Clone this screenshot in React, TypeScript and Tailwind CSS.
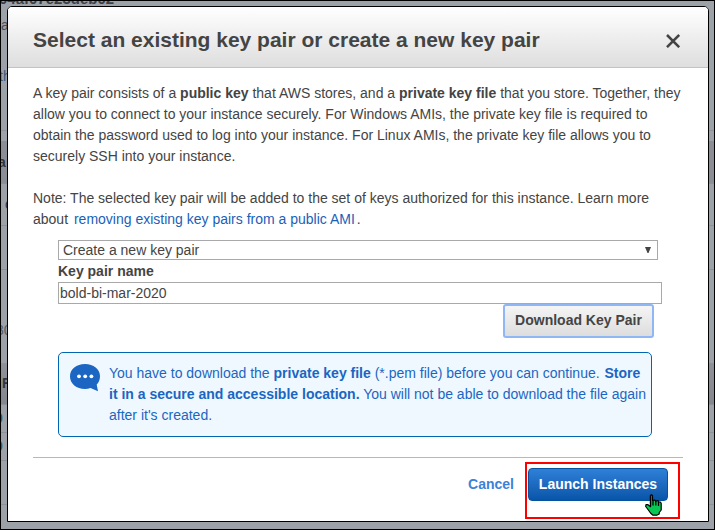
import React from "react";

function Backdrop() {
  const side = "flex items-center overflow-hidden whitespace-nowrap px-0 text-[#33363b] border-[#8d9298] border-b shrink-0";
  return (
    <div className="absolute inset-px flex flex-col overflow-hidden bg-[#9da1a8] text-[14px]">
      <div className="relative h-[130px] shrink-0 border-b border-[#8f949b]">
        <b className="absolute -left-[2px] -top-[11px] text-[15px] leading-[18px] text-[#3c3f44]">04af07e23deb02</b>
        <span className="absolute left-0 top-[14px] text-[#4b4f55]">a</span>
        <span className="absolute -left-[2px] top-[65px] text-[#395a80]">th</span>
      </div>
      <div className="h-[10px] shrink-0" />
      <div className={`${side} h-[43px] bg-[#8b8e94]`}><b className="-ml-[3px]">a</b></div>
      <div className={`${side} h-[42px] text-[#395a80]`}><span className="ml-[4px]">c</span></div>
      <div className={`${side} h-[44px]`} />
      <div className="flex h-[93px] shrink-0 items-center"><span className="-ml-[5px] mt-[28px] text-[#5a5e64]">30</span></div>
      <div className={`${side} h-[42px] bg-linear-to-b from-[#8f9298] to-[#84878d]`}><b className="ml-[1px]">F</b></div>
      <div className={`${side} h-[28px]`}><b className="-ml-[6px] text-[#395a80]">9</b></div>
      <div className={`${side} h-[28px]`}><b className="-ml-[6px] text-[#395a80]">9</b></div>
      <div className={`${side} h-[44px]`} />
    </div>
  );
}

function ChatIcon() {
  return (
    <svg className="mt-[11px] h-[28px] w-[30px] shrink-0" viewBox="0 0 30 28" fill="#1a66c2">
      <path d="M15 0C23.500 0 30 5 30 12.200c0 3.600-1.300 6.300-3.300 8.400L28 27.300 20.500 24c-1.700.6-3.500.9-5.500.9C6.500 24.900 0 19.600 0 12.400 0 5 6.500 0 15 0Z" />
      <g fill="#fff"><circle cx="9" cy="12.300" r="1.900" /><circle cx="15.200" cy="12.300" r="1.900" /><circle cx="21.400" cy="12.300" r="1.900" /></g>
    </svg>
  );
}

function HandCursor() {
  return (
    <svg className="absolute left-[117px] top-[26px] h-[22px] w-[18px]" viewBox="0 0 18 22">
      <path d="M5.500 1.500L6.500.7 7.500 1.500V6.500L9.500 6 11 7l2-.3 1 1.300 1.500 0 .7 1.500V16l-2 2.500V20l-2.500 1.200H8L5.500 19 3 15.500.7 12.500 1 10.700h2l2.500 2V1.500Z" fill="#08c853" stroke="#000" strokeWidth="1.200" strokeLinejoin="round" />
      <path d="M5.500 1.500v11M8 6.500V11.500M10.800 7v4.500M13.500 8v4" fill="none" stroke="#000" strokeWidth="1.300" />
    </svg>
  );
}

function Line({ className = "", children }: { className?: string; children: React.ReactNode }) {
  return <div className={`h-[21px] whitespace-nowrap leading-[21px] ${className}`}>{children}</div>;
}

export default function App() {
  return (
    <div className="relative h-[530px] w-[715px] overflow-hidden bg-black font-['Liberation_Sans',Arial,sans-serif] text-[14px] text-[#444]">
      <Backdrop />
      <main className="absolute left-[7px] top-[6px] flex h-[516px] w-[702px] flex-col overflow-hidden rounded-t-[5px] border border-black bg-white">
        <header className="flex h-[61px] shrink-0 items-center justify-between border-b border-[#c3c3c3] bg-linear-to-b from-white to-[#dedede] pl-[25px] pr-[28px]">
          <h1 className="whitespace-nowrap pt-[6px] text-[21px] font-bold leading-[28px]">Select an existing key pair or create a new key pair</h1>
          <svg className="mt-[7px] h-[14px] w-[14px]" viewBox="0 0 14 14" stroke="#444" strokeWidth="2.500"><path d="M1 1 13.200 13.200M13.200 1 1 13.200" /></svg>
        </header>
        <div className="pl-[25px] pt-[15px]">
          <Line>A key pair consists of a <b>public key</b> that AWS stores, and a <b>private key file</b> that you store. Together, they</Line>
          <Line>allow you to connect to your instance securely. For Windows AMIs, the private key file is required to</Line>
          <Line>obtain the password used to log into your instance. For Linux AMIs, the private key file allows you to</Line>
          <Line>securely SSH into your instance.</Line>
          <Line className="mt-[21px]">Note: The selected key pair will be added to the set of keys authorized for this instance. Learn more</Line>
          <Line>about <a className="ml-[2px] text-[#1a5fb8]">removing existing key pairs from a public AMI</a><span className="ml-[2px]">.</span></Line>
        </div>
        <div className="ml-[50px] mt-[10px] flex h-[20px] w-[600px] shrink-0 items-center justify-between border border-[#a9a9a9] pl-[4px] pr-[6px]">
          <span>Create a new key pair</span>
          <svg className="h-[6px] w-[6px]" viewBox="0 0 6 6"><path d="M0 0h6L3.500 6h-1Z" fill="#444" /></svg>
        </div>
        <b className="ml-[50px] h-[22px] leading-[22px]">Key pair name</b>
        <div className="ml-[50px] flex h-[22px] w-[604px] shrink-0 items-center border border-[#a9a9a9] pl-[1px]">bold-bi-mar-2020</div>
        <button className="ml-[495px] h-[34px] w-[151px] shrink-0 whitespace-nowrap rounded-[3px] border-2 border-[#8fb6f5] bg-linear-to-b from-[#f5f5f5] to-[#dddddd] pb-[2px] text-[14px] font-bold">Download Key Pair</button>
        <section className="ml-[50px] mt-[14px] flex h-[85px] w-[594px] shrink-0 rounded-[5px] border border-[#0066b3] bg-[#f0f8ff] pl-[11px] text-[#1a66c2]">
          <ChatIcon />
          <div className="ml-[9px] pt-[10px]">
            <Line>You have to download the <b>private key file</b> (*.pem file) before you can continue. <b className="ml-px">Store</b></Line>
            <Line><b>it in a secure and accessible location.</b> You will not be able to download the file again</Line>
            <Line>after it's created.</Line>
          </div>
        </section>
        <hr className="ml-[25px] mt-[20px] w-[650px] shrink-0 border-[#b8b8b8]" />
        <footer className="flex justify-end pr-[28px] pt-[4px]">
          <a className="mr-[11px] mt-[12px] font-bold leading-[21px] text-[#3b82d8]">Cancel</a>
          <div className="h-[57px] w-[155px] border-2 border-[#ff0000] pl-[1px] pt-[4px]">
            <div className="relative h-[33px] w-[140px]">
              <button className="h-[33px] w-[140px] whitespace-nowrap rounded-[4px] border border-[#05529e] bg-linear-to-b from-[#2f80d8] to-[#0755a8] text-[14px] font-bold text-white">Launch Instances</button>
              <HandCursor />
            </div>
          </div>
        </footer>
      </main>
    </div>
  );
}
